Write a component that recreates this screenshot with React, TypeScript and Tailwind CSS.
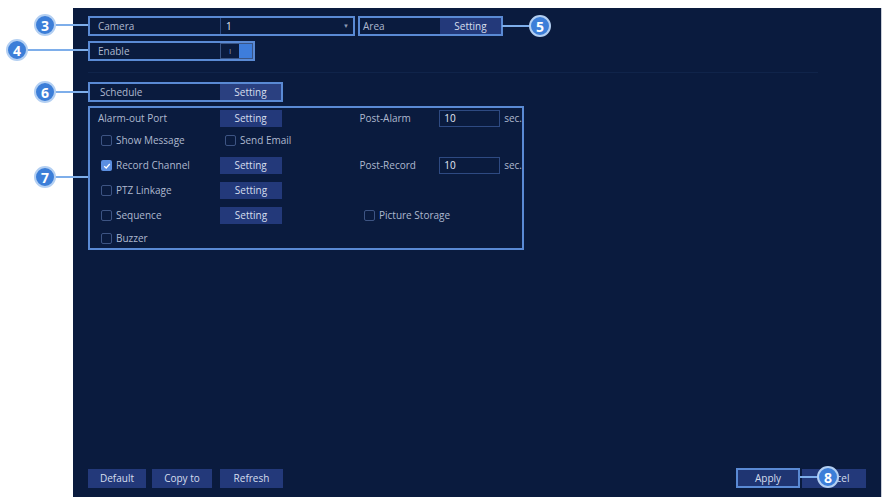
import React from "react";

const font = { fontFamily: '"Open Sans", "Noto Sans", sans-serif' };

function Btn({ children, className = "" }: { children: React.ReactNode; className?: string }) {
  return (
    <div
      className={`flex h-[17px] items-center justify-center bg-[#23397a] text-[10px] text-[#d6deee] ${className}`}
    >
      {children}
    </div>
  );
}

function Check({ on = false }: { on?: boolean }) {
  return on ? (
    <span className="flex h-[11px] w-[11px] items-center justify-center rounded-[2px] bg-[#5b8fe2]">
      <svg viewBox="0 0 10 10" className="h-[8px] w-[8px]">
        <path d="M1.5 5.2 L4 7.5 L8.5 2.5" fill="none" stroke="white" strokeWidth="1.6" />
      </svg>
    </span>
  ) : (
    <span className="h-[11px] w-[11px] rounded-[2px] border border-[#3d5483]" />
  );
}

function CheckItem({ on, label }: { on?: boolean; label: string }) {
  return (
    <div className="flex items-center gap-[4px]">
      <Check on={on} />
      <span>{label}</span>
    </div>
  );
}

function NumBox() {
  return (
    <div className="flex h-[17px] w-[61px] items-center border border-[#2e4a82] pl-[4px] text-[10px] text-[#e4eaf5]">
      10
    </div>
  );
}

export default function App() {
  return (
    <div className="relative h-[501px] w-[887px] overflow-hidden bg-white" style={font}>
      <div className="ml-[73px] mt-[8px] flex h-[489px] w-[809px] flex-col border-r border-[#c9ced8] bg-[#0a1b3e] pl-[15px] text-[10px] text-[#aeb9cf]">
        {/* camera + area */}
        <div className="mt-[8px] flex h-[20px] items-center gap-[3px]">
          <div className="flex h-[20px] w-[267px] items-center border-2 border-[#5a8ad4]">
            <span className="w-[130px] pl-[8px]">Camera</span>
            <div className="flex h-[16px] flex-1 items-center justify-between border-l border-[#2c4a82] pl-[5px] pr-[4px] text-[#e4eaf5]">
              <span>1</span>
              <span className="text-[6px] text-[#8c9ab5]">▼</span>
            </div>
          </div>
          <div className="flex h-[20px] w-[145px] items-center border-2 border-[#5a8ad4]">
            <span className="w-[80px] pl-[3px]">Area</span>
            <div className="flex h-[16px] flex-1 items-center justify-center bg-[#23397a] text-[#d6deee]">
              Setting
            </div>
          </div>
        </div>

        {/* enable */}
        <div className="mt-[5px] flex h-[20px] w-[167px] items-center border-2 border-[#5a8ad4]">
          <span className="w-[130px] pl-[8px]">Enable</span>
          <div className="flex h-[16px] flex-1 items-center border border-[#3a5585]">
            <span className="w-[18px] pl-[8px] text-[8px] text-[#8c9ab5]">I</span>
            <span className="h-full flex-1 bg-[#3e7ddb]" />
          </div>
        </div>

        <div className="mt-[11px] h-px w-[730px] bg-[#10244a]" />

        {/* schedule */}
        <div className="mt-[9px] flex h-[20px] w-[195px] items-center border-2 border-[#5a8ad4]">
          <span className="w-[130px] pl-[10px]">Schedule</span>
          <div className="flex h-[16px] flex-1 items-center justify-center bg-[#2a4080] text-[#d6deee]">
            Setting
          </div>
        </div>

        {/* alarm group */}
        <div className="mt-[4px] flex w-[436px] flex-col border-2 border-[#5a8ad4]">
          <div className="flex h-[20px] items-center">
            <span className="w-[130px] pl-[8px]">Alarm-out Port</span>
            <Btn className="w-[62px]">Setting</Btn>
            <span className="ml-[78px] w-[80px]">Post-Alarm</span>
            <NumBox />
            <span className="ml-[4px]">sec.</span>
          </div>
          <div className="flex h-[25px] items-center pl-[11px]">
            <div className="w-[124px]">
              <CheckItem label="Show Message" />
            </div>
            <CheckItem label="Send Email" />
          </div>
          <div className="flex h-[25px] items-center">
            <div className="w-[130px] pl-[11px]">
              <CheckItem on label="Record Channel" />
            </div>
            <Btn className="w-[62px]">Setting</Btn>
            <span className="ml-[78px] w-[80px]">Post-Record</span>
            <NumBox />
            <span className="ml-[4px]">sec.</span>
          </div>
          <div className="flex h-[25px] items-center">
            <div className="w-[130px] pl-[11px]">
              <CheckItem label="PTZ Linkage" />
            </div>
            <Btn className="w-[62px]">Setting</Btn>
          </div>
          <div className="flex h-[25px] items-center">
            <div className="w-[130px] pl-[11px]">
              <CheckItem label="Sequence" />
            </div>
            <Btn className="w-[62px]">Setting</Btn>
            <div className="ml-[82px]">
              <CheckItem label="Picture Storage" />
            </div>
          </div>
          <div className="flex h-[20px] items-center pl-[11px]">
            <CheckItem label="Buzzer" />
          </div>
        </div>

        <div className="flex-1" />

        {/* bottom bar */}
        <div className="mb-[9px] flex h-[20px] items-center pr-[15px]">
          <Btn className="h-[19px] w-[58px]">Default</Btn>
          <Btn className="ml-[6px] h-[19px] w-[60px]">Copy to</Btn>
          <Btn className="ml-[8px] h-[19px] w-[63px]">Refresh</Btn>
          <div className="flex-1" />
          <div className="flex h-[20px] w-[64px] items-center justify-center border-2 border-[#5a8ad4] bg-[#1f3572] text-[10px] text-[#d6deee]">
            Apply
          </div>
          <Btn className="ml-[2px] h-[19px] w-[64px]">Cancel</Btn>
        </div>
      </div>

      {/* annotation callouts */}
      <div className="absolute left-[54px] top-[24px] h-[2px] w-[34px] bg-[#7eaeea]" />
      <div className="absolute left-[26px] top-[49px] h-[2px] w-[62px] bg-[#7eaeea]" />
      <div className="absolute left-[54px] top-[91px] h-[2px] w-[34px] bg-[#7eaeea]" />
      <div className="absolute left-[54px] top-[176px] h-[2px] w-[34px] bg-[#7eaeea]" />
      <div className="absolute left-[502px] top-[25px] h-[2px] w-[30px] bg-[#7eaeea]" />
      <div className="absolute left-[800px] top-[476px] h-[2px] w-[20px] bg-[#7eaeea]" />

      <div className="absolute left-[34px] top-[14px] flex h-[22px] w-[22px] items-center justify-center rounded-full border-2 border-[#b3cff2] bg-[#3c7ed8] text-[14px] font-bold text-white">
        3
      </div>
      <div className="absolute left-[6px] top-[39px] flex h-[22px] w-[22px] items-center justify-center rounded-full border-2 border-[#b3cff2] bg-[#3c7ed8] text-[14px] font-bold text-white">
        4
      </div>
      <div className="absolute left-[529px] top-[15px] flex h-[22px] w-[22px] items-center justify-center rounded-full border-2 border-[#b3cff2] bg-[#3c7ed8] text-[14px] font-bold text-white">
        5
      </div>
      <div className="absolute left-[34px] top-[81px] flex h-[22px] w-[22px] items-center justify-center rounded-full border-2 border-[#b3cff2] bg-[#3c7ed8] text-[14px] font-bold text-white">
        6
      </div>
      <div className="absolute left-[34px] top-[166px] flex h-[22px] w-[22px] items-center justify-center rounded-full border-2 border-[#b3cff2] bg-[#3c7ed8] text-[14px] font-bold text-white">
        7
      </div>
      <div className="absolute left-[817px] top-[466px] flex h-[22px] w-[22px] items-center justify-center rounded-full border-2 border-[#b3cff2] bg-[#3c7ed8] text-[14px] font-bold text-white">
        8
      </div>
    </div>
  );
}
